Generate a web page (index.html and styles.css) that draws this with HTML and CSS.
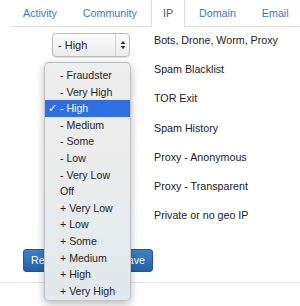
FILE: index.html
```html
<!DOCTYPE html>
<html>
<head>
<meta charset="utf-8">
<link rel="stylesheet" href="styles.css">
</head>
<body>
<ul class="tabs">
  <li class="tab"><a>Activity</a></li>
  <li class="tab"><a>Community</a></li>
  <li class="tab active"><a>IP</a></li>
  <li class="tab"><a>Domain</a></li>
  <li class="tab"><a>Email</a></li>
</ul>
<div class="form">
  <div class="row">
    <div class="select"><span class="val">- High</span><span class="arrows"><svg width="6" height="10" viewBox="0 0 6 10"><path d="M3 1 L5.5 4 H0.5 Z M3 9 L5.5 6 H0.5 Z" fill="#333"/></svg></span></div>
    <div class="label">Bots, Drone, Worm, Proxy</div>
  </div>
  <div class="row">
    <div class="select"><span class="val"></span><span class="arrows"></span></div>
    <div class="label">Spam Blacklist</div>
  </div>
  <div class="row">
    <div class="select"><span class="val"></span><span class="arrows"></span></div>
    <div class="label">TOR Exit</div>
  </div>
  <div class="row">
    <div class="select"><span class="val"></span><span class="arrows"></span></div>
    <div class="label">Spam History</div>
  </div>
  <div class="row">
    <div class="select"><span class="val"></span><span class="arrows"></span></div>
    <div class="label">Proxy - Anonymous</div>
  </div>
  <div class="row">
    <div class="select"><span class="val"></span><span class="arrows"></span></div>
    <div class="label">Proxy - Transparent</div>
  </div>
  <div class="row">
    <div class="select"><span class="val"></span><span class="arrows"></span></div>
    <div class="label">Private or no geo IP</div>
  </div>
  <div class="buttons">
    <button class="btn reset">Re</button>
    <button class="btn save">ave</button>
  </div>
</div>
<hr class="rule">
<ul class="menu">
  <li class="item"><span class="check"></span>- Fraudster</li>
  <li class="item"><span class="check"></span>- Very High</li>
  <li class="item selected"><span class="check">✓</span>- High</li>
  <li class="item"><span class="check"></span>- Medium</li>
  <li class="item"><span class="check"></span>- Some</li>
  <li class="item"><span class="check"></span>- Low</li>
  <li class="item"><span class="check"></span>- Very Low</li>
  <li class="item"><span class="check"></span>Off</li>
  <li class="item"><span class="check"></span>+ Very Low</li>
  <li class="item"><span class="check"></span>+ Low</li>
  <li class="item"><span class="check"></span>+ Some</li>
  <li class="item"><span class="check"></span>+ Medium</li>
  <li class="item"><span class="check"></span>+ High</li>
  <li class="item"><span class="check"></span>+ Very High</li>
</ul>
</body>
</html>
```
FILE: styles.css
```css
html, body {
  margin: 0;
  padding: 0;
  background: #fff;
  font-family: "Liberation Sans", Arial, Helvetica, sans-serif;
  font-size: 10.7px;
  color: #333;
  width: 300px;
  height: 306px;
  overflow: hidden;
  position: relative;
}

.tabs {
  list-style: none;
  margin: 0 0 0 11px;
  padding: 0;
  display: flex;
  gap: 2px;
  border-bottom: 1px solid #ddd;
  height: 26px;
}

.tab {
  border: 1px solid transparent;
  border-top: none;
  border-bottom: none;
  padding: 0 11px;
  height: 27px;
  line-height: 26px;
  box-sizing: border-box;
}

.tab a {
  color: #3a7cc4;
}

.tab.active {
  border-left-color: #ddd;
  border-right-color: #ddd;
  background: #fff;
}

.tab.active a {
  color: #555;
}

.form {
  margin-top: 6px;
}

.row {
  display: flex;
  align-items: flex-start;
  height: 29.2px;
}

.select {
  margin-left: 52px;
  width: 78px;
  height: 24px;
  box-sizing: border-box;
  border: 1px solid #b9b9b9;
  border-radius: 4px;
  background: linear-gradient(#fbfbfb, #ececec);
  box-shadow: 0 1px 1px rgba(0,0,0,0.12);
  display: flex;
  align-items: center;
  color: #222;
}

.val {
  flex: 1;
  padding-left: 5px;
  font-size: 11px;
}

.arrows {
  width: 13px;
  height: 100%;
  border-left: 1px solid #d0d0d0;
  display: flex;
  align-items: center;
  justify-content: center;
}

.label {
  margin-left: 24px;
  line-height: 14px;
  color: #222;
}

.buttons {
  display: flex;
  gap: 2px;
  margin: 11.6px 0 0 23px;
}

.btn {
  font-family: inherit;
  font-size: 10.7px;
  color: #fff;
  height: 23px;
  border: 1px solid #22589a;
  border-radius: 3px;
  background: linear-gradient(#3b82c8, #2560a6);
  padding: 0 7px;
  margin: 0;
}

.reset {
  width: 90px;
  text-align: left;
}

.save {
  width: 38px;
  text-align: right;
}

.rule {
  border: none;
  border-top: 1.5px solid #e6e6e6;
  margin: 10px 0 0 0;
}

.menu {
  position: absolute;
  left: 43.5px;
  top: 62px;
  width: 87px;
  height: 239px;
  box-sizing: border-box;
  margin: 0;
  padding: 4px 0;
  list-style: none;
  border: 1px solid rgba(0,0,0,0.18);
  border-radius: 5px;
  background: linear-gradient(#eeeeee 0%, #ececec 40%, #e6ebed 70%, #e0e9ec 100%);
  box-shadow: 0 3px 8px rgba(0,0,0,0.28);
}

.item {
  height: 16.6px;
  line-height: 16.6px;
  padding-left: 3px;
  color: #1e1e1e;
  display: flex;
  white-space: nowrap;
  font-size: 10.6px;
}

.check {
  width: 12.5px;
  flex: none;
  font-size: 11px;
}

.item.selected {
  background: #2f6fe2;
  color: #fff;
}
```
